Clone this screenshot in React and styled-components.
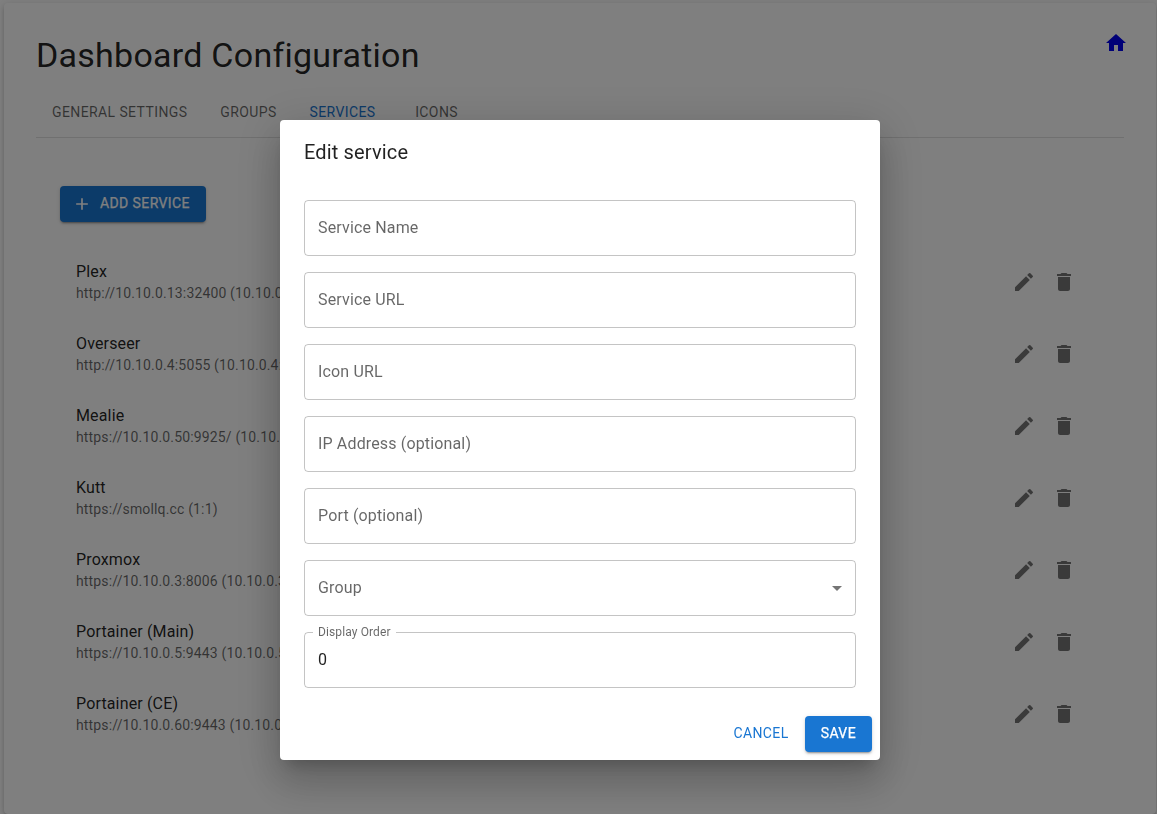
import React from "react";
import styled, { createGlobalStyle, css } from "styled-components";

const GlobalStyle = createGlobalStyle`
  *, *::before, *::after { box-sizing: border-box; }
  html, body { margin: 0; height: 100%; overflow: hidden; }
  body {
    background: #fff;
    color: rgba(0, 0, 0, 0.87);
    font-family: Roboto, "Liberation Sans", sans-serif;
    font-size: 16px;
    line-height: 1.5;
    letter-spacing: 0.00938em;
  }
`;

const Page = styled.div`
  height: 814px;
  padding: 3px 1px 0 4px;
  overflow: hidden;
`;

const Paper = styled.main`
  padding: 32px;
  height: 811px;
  background: #fff;
  border-radius: 4px;
  box-shadow: 0 3px 3px -2px rgba(0, 0, 0, 0.2), 0 3px 4px 0 rgba(0, 0, 0, 0.14),
    0 1px 8px 0 rgba(0, 0, 0, 0.12);
`;

const Header = styled.header`
  display: flex;
  align-items: flex-start;
  justify-content: space-between;
  margin-bottom: 13.9px;
`;

const Title = styled.h1`
  margin: 0;
  font-size: 34px;
  font-weight: 400;
  line-height: 40px;
  letter-spacing: 0.00735em;
`;

const HomeLink = styled.a`
  display: flex;
  margin: -4px -4px 0 0;
  color: #0000ee;
`;

const SvgIcon = styled.svg`
  display: block;
  flex: none;
  width: ${(p) => p.$size || 24}px;
  height: ${(p) => p.$size || 24}px;
  fill: currentColor;
`;

const TabBar = styled.nav`
  display: flex;
  border-bottom: 1px solid rgba(0, 0, 0, 0.12);
`;

const Tab = styled.button`
  min-width: 90px;
  height: 48px;
  padding: 12px 16px;
  border: 0;
  background: none;
  box-shadow: ${(p) => (p.$active ? "inset 0 -2px #1976d2" : "none")};
  color: ${(p) => (p.$active ? "#1976d2" : "rgba(0, 0, 0, 0.6)")};
  font: 400 14px/1.25 Roboto, sans-serif;
  letter-spacing: 0.02857em;
  text-transform: uppercase;
  white-space: nowrap;
`;

const Panel = styled.section`
  padding: 48px 24px 24px;
`;

const Button = styled.button`
  display: inline-flex;
  align-items: center;
  justify-content: center;
  min-width: 64px;
  height: 36px;
  padding: 5px 8px 7px;
  border: 0;
  border-radius: 4px;
  background: none;
  color: #1976d2;
  font: 400 14px/24px Roboto, sans-serif;
  letter-spacing: 0.02857em;
  text-transform: uppercase;
  ${(p) =>
    p.$contained &&
    css`
      padding: 5px 16px 7px;
      background: #1976d2;
      color: #fff;
      -webkit-text-stroke: 0.25px currentColor;
      box-shadow: 0 3px 1px -2px rgba(0, 0, 0, 0.2), 0 2px 2px 0 rgba(0, 0, 0, 0.14),
        0 1px 5px 0 rgba(0, 0, 0, 0.12);
    `}
`;

const StartIcon = styled.span`
  display: flex;
  margin: 2px 8px 0 -4px;
`;

const List = styled.ul`
  margin: 16px 0 0;
  padding: 8px 0;
  list-style: none;
`;

const ListItem = styled.li`
  display: flex;
  align-items: center;
  height: 72px;
  padding: 8px 16px;
`;

const ItemText = styled.div`
  flex: 1;
  min-width: 0;
`;

const Primary = styled.div`
  line-height: 24px;
`;

const Secondary = styled.div`
  padding-bottom: 2px;
  color: rgba(0, 0, 0, 0.6);
  font-size: 14px;
  line-height: 18px;
  letter-spacing: 0.01071em;
`;

const IconButton = styled.button`
  display: flex;
  padding: 8px;
  border: 0;
  border-radius: 50%;
  background: none;
  color: rgba(0, 0, 0, 0.54);
`;

const Backdrop = styled.div`
  position: fixed;
  inset: 0;
  display: flex;
  align-items: flex-start;
  justify-content: center;
  padding: 120px 0 0 3px;
  background: rgba(0, 0, 0, 0.5);
`;

const Dialog = styled.div`
  width: 600px;
  background: #fff;
  border-radius: 4px;
  box-shadow: 0 11px 15px -7px rgba(0, 0, 0, 0.2), 0 24px 38px 3px rgba(0, 0, 0, 0.14),
    0 9px 46px 8px rgba(0, 0, 0, 0.12);
`;

const DialogTitle = styled.h2`
  margin: 0;
  padding: 16px 24px;
  font-size: 20px;
  font-weight: 400;
  line-height: 32px;
  letter-spacing: 0.0075em;
`;

const Fields = styled.form`
  display: flex;
  flex-direction: column;
  gap: 16px;
  padding: 16px 24px 20px;
`;

const Field = styled.div`
  position: relative;
  display: flex;
  align-items: center;
  height: 56px;
  padding: 0 7px 0 14px;
`;

const Label = styled.label`
  flex: 1;
  color: rgba(0, 0, 0, 0.6);
  line-height: 24px;
`;

const FloatingLabel = styled.label`
  position: absolute;
  top: -9px;
  left: 14px;
  color: rgba(0, 0, 0, 0.6);
  line-height: 23px;
  transform: scale(0.75);
  transform-origin: top left;
  white-space: nowrap;
`;

const Outline = styled.fieldset`
  position: absolute;
  inset: -5px 0 0;
  margin: 0;
  padding: 0 8px;
  border: 1px solid rgba(0, 0, 0, 0.23);
  border-radius: 4px;
  pointer-events: none;
`;

const Notch = styled.legend`
  height: 11px;
  width: 83px;
  padding: 0;
`;

const PlainOutline = styled(Outline)`
  inset: 0;
`;

const Value = styled.input`
  width: 100%;
  padding: 0;
  border: 0;
  outline: 0;
  background: none;
  color: inherit;
  font: inherit;
  letter-spacing: inherit;
  height: 23px;
`;

const Caret = styled.span`
  display: flex;
  color: rgba(0, 0, 0, 0.54);
`;

const Actions = styled.footer`
  display: flex;
  justify-content: flex-end;
  gap: 8px;
  padding: 8px;
`;

const paths = {
  home: "M10 20v-6h4v6h5v-8h3L12 3 2 12h3v8z",
  add: "M19 13h-6v6h-2v-6H5v-2h6V5h2v6h6z",
  edit: "M3 17.25V21h3.75L17.81 9.94l-3.75-3.75zM20.71 7.04c.39-.39.39-1.02 0-1.41l-2.34-2.34a.9959.9959 0 0 0-1.41 0l-1.83 1.83 3.75 3.75z",
  remove: "M6 19c0 1.1.9 2 2 2h8c1.1 0 2-.9 2-2V7H6zM19 4h-3.5l-1-1h-5l-1 1H5v2h14z",
  caret: "m7 10 5 5 5-5z",
};

const Icon = ({ name, size }) => (
  <SvgIcon viewBox="0 0 24 24" $size={size} aria-hidden="true">
    <path d={paths[name]} />
  </SvgIcon>
);

const tabs = ["General Settings", "Groups", "Services", "Icons"];

const services = [
  ["Plex", "http://10.10.0.13:32400 (10.10.0.13)"],
  ["Overseer", "http://10.10.0.4:5055 (10.10.0.4:80)"],
  ["Mealie", "https://10.10.0.50:9925/ (10.10.0.50)"],
  ["Kutt", "https://smollq.cc (1:1)"],
  ["Proxmox", "https://10.10.0.3:8006 (10.10.0.3)"],
  ["Portainer (Main)", "https://10.10.0.5:9443 (10.10.0.5)"],
  ["Portainer (CE)", "https://10.10.0.60:9443 (10.10.0.60)"],
];

const emptyFields = ["Service Name", "Service URL", "Icon URL", "IP Address (optional)", "Port (optional)"];

export default function App() {
  return (
    <>
      <GlobalStyle />
      <Page>
        <Paper>
          <Header>
            <Title>Dashboard Configuration</Title>
            <HomeLink href="#" aria-label="Home">
              <Icon name="home" />
            </HomeLink>
          </Header>
          <TabBar>
            {tabs.map((tab) => (
              <Tab key={tab} $active={tab === "Services"}>
                {tab}
              </Tab>
            ))}
          </TabBar>
          <Panel>
            <Button $contained>
              <StartIcon>
                <Icon name="add" size={20} />
              </StartIcon>
              Add Service
            </Button>
            <List>
              {services.map(([name, address]) => (
                <ListItem key={name}>
                  <ItemText>
                    <Primary>{name}</Primary>
                    <Secondary>{address}</Secondary>
                  </ItemText>
                  <IconButton aria-label="Edit">
                    <Icon name="edit" />
                  </IconButton>
                  <IconButton aria-label="Delete">
                    <Icon name="remove" />
                  </IconButton>
                </ListItem>
              ))}
            </List>
          </Panel>
        </Paper>
      </Page>
      <Backdrop>
        <Dialog role="dialog">
          <DialogTitle>Edit service</DialogTitle>
          <Fields>
            {emptyFields.map((label) => (
              <Field key={label}>
                <Label>{label}</Label>
                <PlainOutline />
              </Field>
            ))}
            <Field>
              <Label>Group</Label>
              <Caret>
                <Icon name="caret" />
              </Caret>
              <PlainOutline />
            </Field>
            <Field>
              <FloatingLabel htmlFor="order">Display Order</FloatingLabel>
              <Value id="order" defaultValue="0" />
              <Outline>
                <Notch />
              </Outline>
            </Field>
          </Fields>
          <Actions>
            <Button>Cancel</Button>
            <Button $contained>Save</Button>
          </Actions>
        </Dialog>
      </Backdrop>
    </>
  );
}
